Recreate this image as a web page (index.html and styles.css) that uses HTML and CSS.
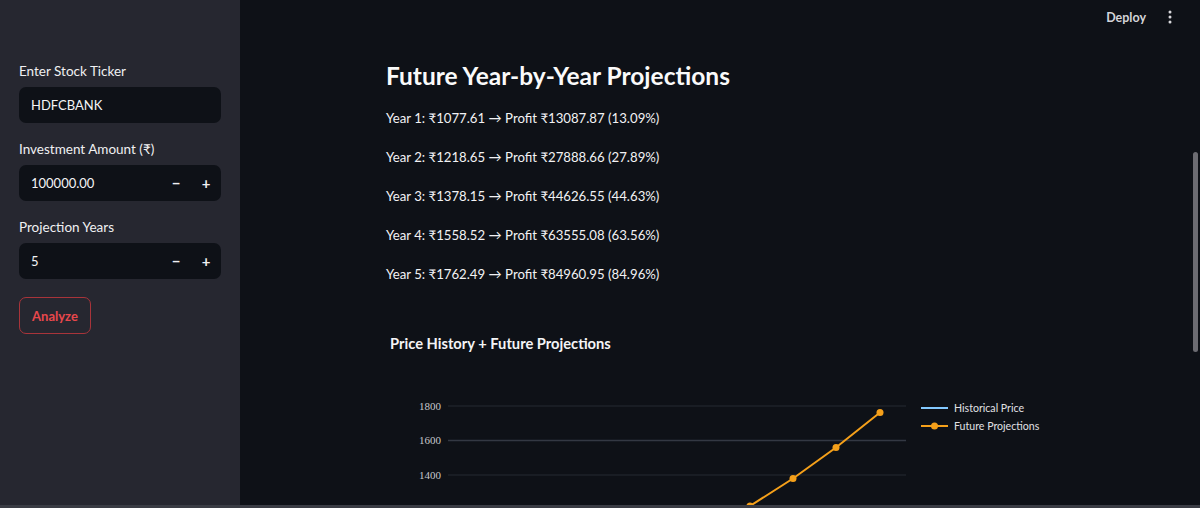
FILE: index.html
```html
<!DOCTYPE html>
<html lang="en">
<head>
<meta charset="utf-8">
<title>Stock Projection</title>
<link rel="stylesheet" href="styles.css">
</head>
<body>
<div class="app">
  <aside class="sidebar">
    <div class="field">
      <label class="field-label">Enter Stock Ticker</label>
      <div class="input"><span class="input-value">HDFCBANK</span></div>
    </div>
    <div class="field">
      <label class="field-label">Investment Amount (₹)</label>
      <div class="input">
        <span class="input-value">100000.00</span>
        <span class="step">&minus;</span><span class="step">+</span>
      </div>
    </div>
    <div class="field">
      <label class="field-label">Projection Years</label>
      <div class="input">
        <span class="input-value">5</span>
        <span class="step">&minus;</span><span class="step">+</span>
      </div>
    </div>
    <button class="btn">Analyze</button>
  </aside>
  <main class="main">
    <header class="topbar">
      <span class="deploy">Deploy</span>
      <svg class="kebab" width="4" height="14" viewBox="0 0 4 14"><circle cx="2" cy="2" r="1.5" fill="#d8d8dc"/><circle cx="2" cy="7" r="1.5" fill="#d8d8dc"/><circle cx="2" cy="12" r="1.5" fill="#d8d8dc"/></svg>
    </header>
    <section class="content">
      <h3 class="title">Future Year-by-Year Projections</h3>
      <ul class="years">
        <li>Year 1: ₹1077.61 → Profit ₹13087.87 (13.09%)</li>
        <li>Year 2: ₹1218.65 → Profit ₹27888.66 (27.89%)</li>
        <li>Year 3: ₹1378.15 → Profit ₹44626.55 (44.63%)</li>
        <li>Year 4: ₹1558.52 → Profit ₹63555.08 (63.56%)</li>
        <li>Year 5: ₹1762.49 → Profit ₹84960.95 (84.96%)</li>
      </ul>
      <div class="chart-title">Price History + Future Projections</div>
      <svg class="chart" width="700" height="190" viewBox="0 0 700 190">
        <line x1="62" y1="46" x2="520" y2="46" stroke="#252a33" stroke-width="1"/>
        <line x1="62" y1="80.5" x2="520" y2="80.5" stroke="#333843" stroke-width="1.5"/>
        <line x1="62" y1="115" x2="520" y2="115" stroke="#252a33" stroke-width="1"/>
        <line x1="62" y1="149.5" x2="520" y2="149.5" stroke="#252a33" stroke-width="1"/>
        <g class="tick" text-anchor="end">
          <text x="55" y="49.5">1800</text>
          <text x="55" y="84">1600</text>
          <text x="55" y="118.5">1400</text>
        </g>
        <polyline points="321,180 364,146 407,118.5 450,87.5 494,52.5" fill="none" stroke="#f5a01a" stroke-width="2"/>
        <g fill="#f5a01a">
          <circle cx="364" cy="146" r="3.5"/>
          <circle cx="407" cy="118.5" r="3.5"/>
          <circle cx="450" cy="87.5" r="3.5"/>
          <circle cx="494" cy="52.5" r="3.5"/>
        </g>
        <line x1="535" y1="48" x2="562" y2="48" stroke="#83c9ff" stroke-width="2"/>
        <line x1="535" y1="66" x2="562" y2="66" stroke="#f5a01a" stroke-width="2"/>
        <circle cx="548.5" cy="66" r="3.5" fill="#f5a01a"/>
        <g class="legend">
          <text x="568" y="52">Historical Price</text>
          <text x="568" y="70">Future Projections</text>
        </g>
      </svg>
    </section>
    <div class="scroll-thumb"></div>
  </main>
</div>
<div class="bottom-edge"></div>
</body>
</html>
```

FILE: styles.css
```css
* { box-sizing: border-box; }
html, body {
  margin: 0;
  padding: 0;
  background: #0e1117;
  height: 508px;
  overflow: hidden;
}
body {
  font-family: "Lato", "Noto Sans", "DejaVu Sans", sans-serif;
  color: #fafafa;
  display: flex;
  flex-direction: column;
}
.app {
  display: flex;
  height: 505px;
  flex: none;
  overflow: hidden;
}
.sidebar {
  width: 240px;
  flex: none;
  background: #262730;
  padding: 63px 19px 0 19px;
  display: flex;
  flex-direction: column;
  gap: 18px;
}
.field {
  display: flex;
  flex-direction: column;
  gap: 8px;
  flex: none;
}
.field-label {
  font-size: 13.5px;
  line-height: 16px;
  color: #f0f0f2;
}
.input {
  height: 36px;
  width: 202px;
  background: #0e1117;
  border-radius: 7px;
  display: flex;
  align-items: center;
  padding-left: 12px;
}
.input-value {
  flex: 1;
  font-size: 13px;
  color: #f4f4f6;
}
.step {
  width: 30px;
  text-align: center;
  font-size: 15px;
  font-weight: 700;
  color: #f0f0f2;
}
.btn {
  align-self: flex-start;
  flex: none;
  width: 72px;
  height: 37px;
  background: transparent;
  border: 1px solid #a8343a;
  border-radius: 7px;
  color: #e8474c;
  font-family: inherit;
  font-size: 13px;
  font-weight: 700;
  padding: 0;
}
.main {
  flex: 1;
  position: relative;
  display: flex;
  flex-direction: column;
  overflow: hidden;
}
.topbar {
  flex: none;
  height: 34px;
  display: flex;
  justify-content: flex-end;
  align-items: center;
  gap: 22px;
  padding-right: 28px;
}
.deploy {
  font-size: 12.5px;
  font-weight: 700;
  color: #d4d4d8;
}
.content {
  flex: none;
  padding: 26px 0 0 146px;
}
.title {
  margin: 0 0 16px 0;
  font-size: 24.5px;
  line-height: 32px;
  font-weight: 700;
  color: #fafafa;
}
.years {
  list-style: none;
  margin: 0;
  padding: 0;
  display: flex;
  flex-direction: column;
  gap: 19px;
}
.years li {
  font-size: 13.2px;
  line-height: 20px;
  color: #f2f2f4;
}
.chart-title {
  margin: 50px 0 8px 4px;
  font-size: 14.7px;
  line-height: 18px;
  font-weight: 700;
  color: #f4f4f6;
}
.chart {
  display: block;
}
.tick {
  font-family: "Liberation Serif", serif;
  font-size: 11px;
  fill: #c8c8cc;
}
.legend {
  font-family: "Lato", sans-serif;
  font-size: 10.6px;
  fill: #e0e0e4;
}
.scroll-thumb {
  position: absolute;
  right: 2px;
  top: 152px;
  width: 5px;
  height: 200px;
  border-radius: 3px;
  background: #6c6c72;
}
.bottom-edge {
  height: 3px;
  background: #3a3c44;
  flex: none;
}
```
